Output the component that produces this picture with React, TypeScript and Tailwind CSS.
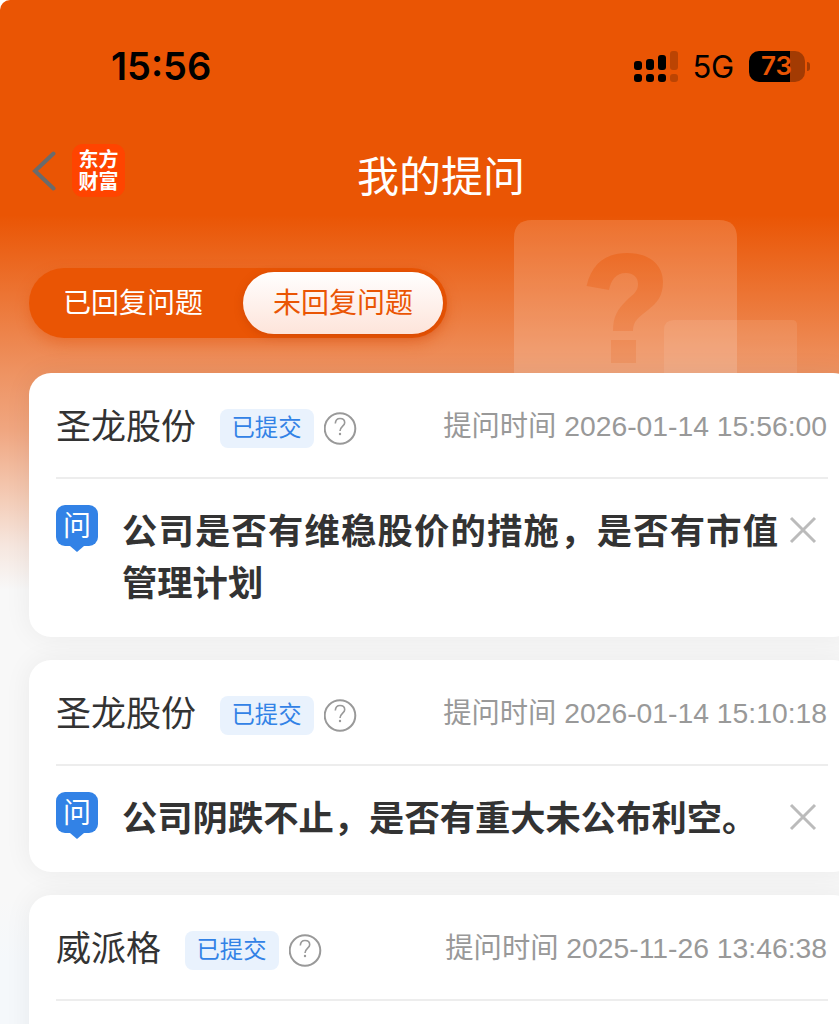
// App.tsx
type Question = {
  stock: string
  status: string
  askedAt: string
  content?: string
}

const questions: Question[] = [
  {
    stock: "圣龙股份",
    status: "已提交",
    askedAt: "2026-01-14 15:56:00",
    content: "公司是否有维稳股价的措施，是否有市值管理计划",
  },
  {
    stock: "圣龙股份",
    status: "已提交",
    askedAt: "2026-01-14 15:10:18",
    content: "公司阴跌不止，是否有重大未公布利空。",
  },
  {
    stock: "威派格",
    status: "已提交",
    askedAt: "2025-11-26 13:46:38",
  },
]

function SignalIcon() {
  return (
    <svg width="44" height="31" viewBox="0 0 44 31">
      <rect x="0" y="10" width="8" height="9" rx="3" />
      <rect x="12" y="8" width="8" height="11" rx="3" />
      <rect x="24" y="4" width="8" height="15" rx="3" />
      <rect x="36" y="0" width="8" height="19" rx="3" opacity="0.2" />
      <rect x="0" y="23" width="8" height="8" rx="3" />
      <rect x="12" y="23" width="8" height="8" rx="3" />
      <rect x="24" y="23" width="8" height="8" rx="3" />
      <rect x="36" y="23" width="8" height="8" rx="3" opacity="0.2" />
    </svg>
  )
}

function Battery() {
  return (
    <div className="flex items-center gap-[2px]">
      <div className="flex h-[31px] w-[56px] items-center justify-center rounded-[10px] bg-[linear-gradient(to_right,#000_41px,#a33b03_41px)]">
        <span className="pr-[1px] font-['Inter'] text-[26px] leading-none font-semibold text-[#ea5504]">73</span>
      </div>
      <div className="h-[9px] w-[3px] rounded-r-full bg-[#a33b03]" />
    </div>
  )
}

function StatusBar() {
  return (
    <div className="flex h-[132px] items-center justify-between pr-[29px] pl-[111px] text-black">
      <span className="font-['Inter'] text-[38px] leading-none font-semibold">15:56</span>
      <div className="flex items-center">
        <SignalIcon />
        <span className="mr-[15px] ml-[14px] pt-px font-['Inter'] text-[31px] leading-none tracking-[-0.2px]">5G</span>
        <Battery />
      </div>
    </div>
  )
}

function NavBar() {
  return (
    <div className="flex h-[87px] items-start pl-[32px]">
      <svg className="mt-[19px]" width="24" height="40" viewBox="0 0 24 40" fill="none" stroke="#6b6b6b" strokeWidth="4">
        <path d="M21.500 2.500 3 20 21.500 37.500" strokeLinecap="round" />
      </svg>
      <div className="mt-[12px] ml-[16px] flex h-[53px] w-[53px] flex-col items-center justify-center rounded-[11px] bg-[#ff4400] pb-px text-[20px] leading-[22px] font-bold text-white">
        <span>东方</span>
        <span>财富</span>
      </div>
      <h1 className="mt-[21px] ml-[232px] text-[42px] leading-none text-white">我的提问</h1>
    </div>
  )
}

function HeroArt() {
  return (
    <svg className="absolute top-[220px] left-[514px]" width="286" height="154" viewBox="0 0 286 154">
      <defs>
        <mask id="mark">
          <rect width="286" height="154" fill="#fff" />
          <path
            d="M72.500 66C78 43 92 33 113 33C137 33 149 46 149 62C149 76 143 83 134 90C124 98 119 101 119 111H99C99 96 104 89 112 81C119 74 124 72 124 64C124 57 119 53 112 53C102 53 97 60 95 70Z M97 120H122V143H97Z"
            fill="#000"
            fillOpacity="0.65"
          />
        </mask>
      </defs>
      <path
        d="M0 154V18Q0 0 18 0H205Q223 0 223 18V154Z"
        fill="#fff"
        fillOpacity="0.16"
        mask="url(#mark)"
      />
      <path d="M150 154V110Q150 100 160 100H278Q283 100 283 105V154Z" fill="#fff" fillOpacity="0.09" />
    </svg>
  )
}

function Tabs() {
  return (
    <div className="ml-[29px] flex h-[70px] w-[418px] items-center rounded-full bg-[#ea5504] pr-[4px] text-[28px] leading-none shadow-[0_6px_14px_rgba(224,80,10,0.4)]">
      <button className="flex-1 pr-[6px] pb-[4px] text-center text-white">已回复问题</button>
      <button className="mb-[1px] h-[62px] w-[200px] rounded-full bg-linear-to-b from-white to-[#fde4da] pb-[3px] text-[#ea5504] shadow-[0_2px_8px_rgba(170,50,0,0.35)]">
        未回复问题
      </button>
    </div>
  )
}

function HelpIcon() {
  return (
    <svg width="33" height="33" viewBox="0 0 33 33" fill="none" stroke="#999">
      <circle cx="16" cy="16.500" r="15.300" strokeWidth="2" />
      <path d="M11.300 11.500C11.500 8.300 13.500 6.500 16 6.500C18.700 6.500 20.700 8.200 20.700 10.700C20.700 14 16.200 14.500 16 19" strokeWidth="1.600" />
      <circle cx="16" cy="22" r="1.200" fill="#999" stroke="none" />
    </svg>
  )
}

function AskBadge() {
  return (
    <div className="flex w-[42px] shrink-0 flex-col items-center">
      <div className="flex h-[41px] w-[42px] items-center justify-center rounded-[9px] bg-[#3282e6] pb-[3px] text-[28px] leading-none text-white">
        问
      </div>
      <svg width="14" height="6" viewBox="0 0 14 6" fill="#3282e6">
        <path d="M0 0H14L7 6Z" />
      </svg>
    </div>
  )
}

function CloseIcon() {
  return (
    <svg className="mt-[11px] ml-[11px] shrink-0" width="28" height="28" viewBox="0 0 28 28" fill="none" stroke="#bbb">
      <path d="M2 2 26 26M26 2 2 26" strokeWidth="3" />
    </svg>
  )
}

function QuestionCard({ question }: { question: Question }) {
  return (
    <article className="w-[826px] rounded-[22px] bg-white px-[27px] shadow-[0_0_28px_rgba(0,0,0,0.06)]">
      <div className="flex h-[106px] items-center border-b-2 border-[#ededed]">
        <span className="pb-[4px] text-[35px] leading-none text-[#333]">{question.stock}</span>
        <span className="mt-[6px] ml-[24px] flex h-[39px] w-[94px] items-center justify-center rounded-[8px] bg-[#e9f2fd] pr-px pb-[3px] text-[23.300px] leading-none text-[#3282e6]">
          {question.status}
        </span>
        <span className="mt-[6px] ml-[10px]">
          <HelpIcon />
        </span>
        <span className="mr-[1px] ml-auto pt-[2px] font-['Liberation_Sans','Noto_Sans_CJK_SC',sans-serif] text-[28.300px] leading-none text-[#999]">
          提问时间 {question.askedAt}
        </span>
      </div>
      <div className="flex min-h-[100px] items-start pt-[26px] pb-[28px]">
        {question.content && (
          <>
            <AskBadge />
            <p className="mt-[-2px] mb-[2px] ml-[24px] w-[656px] text-justify text-[35.300px] leading-[52px] font-bold text-[#333]">
              {question.content}
            </p>
            <CloseIcon />
          </>
        )}
      </div>
    </article>
  )
}

export default function App() {
  return (
    <div className="h-[1024px] w-[840px] overflow-hidden bg-white pr-px font-['Noto_Sans_CJK_SC',sans-serif]">
      <div className="relative h-full overflow-hidden rounded-tl-[10px] bg-[linear-gradient(to_bottom,#ea5504_0px,#ea5504_215px,#ee9362_373px,#f0a680_430px,#f4cdb8_500px,#f6e6de_545px,#f8f8f8_590px,#f8f8f8_900px,#f5f8fb_960px)]">
        <HeroArt />
        <StatusBar />
        <NavBar />
        <div className="mt-[49px]">
          <Tabs />
        </div>
        <main className="relative mt-[35px] ml-[29px] flex flex-col gap-[23px]">
          {questions.map(question => (
            <QuestionCard key={question.askedAt} question={question} />
          ))}
        </main>
      </div>
    </div>
  )
}
